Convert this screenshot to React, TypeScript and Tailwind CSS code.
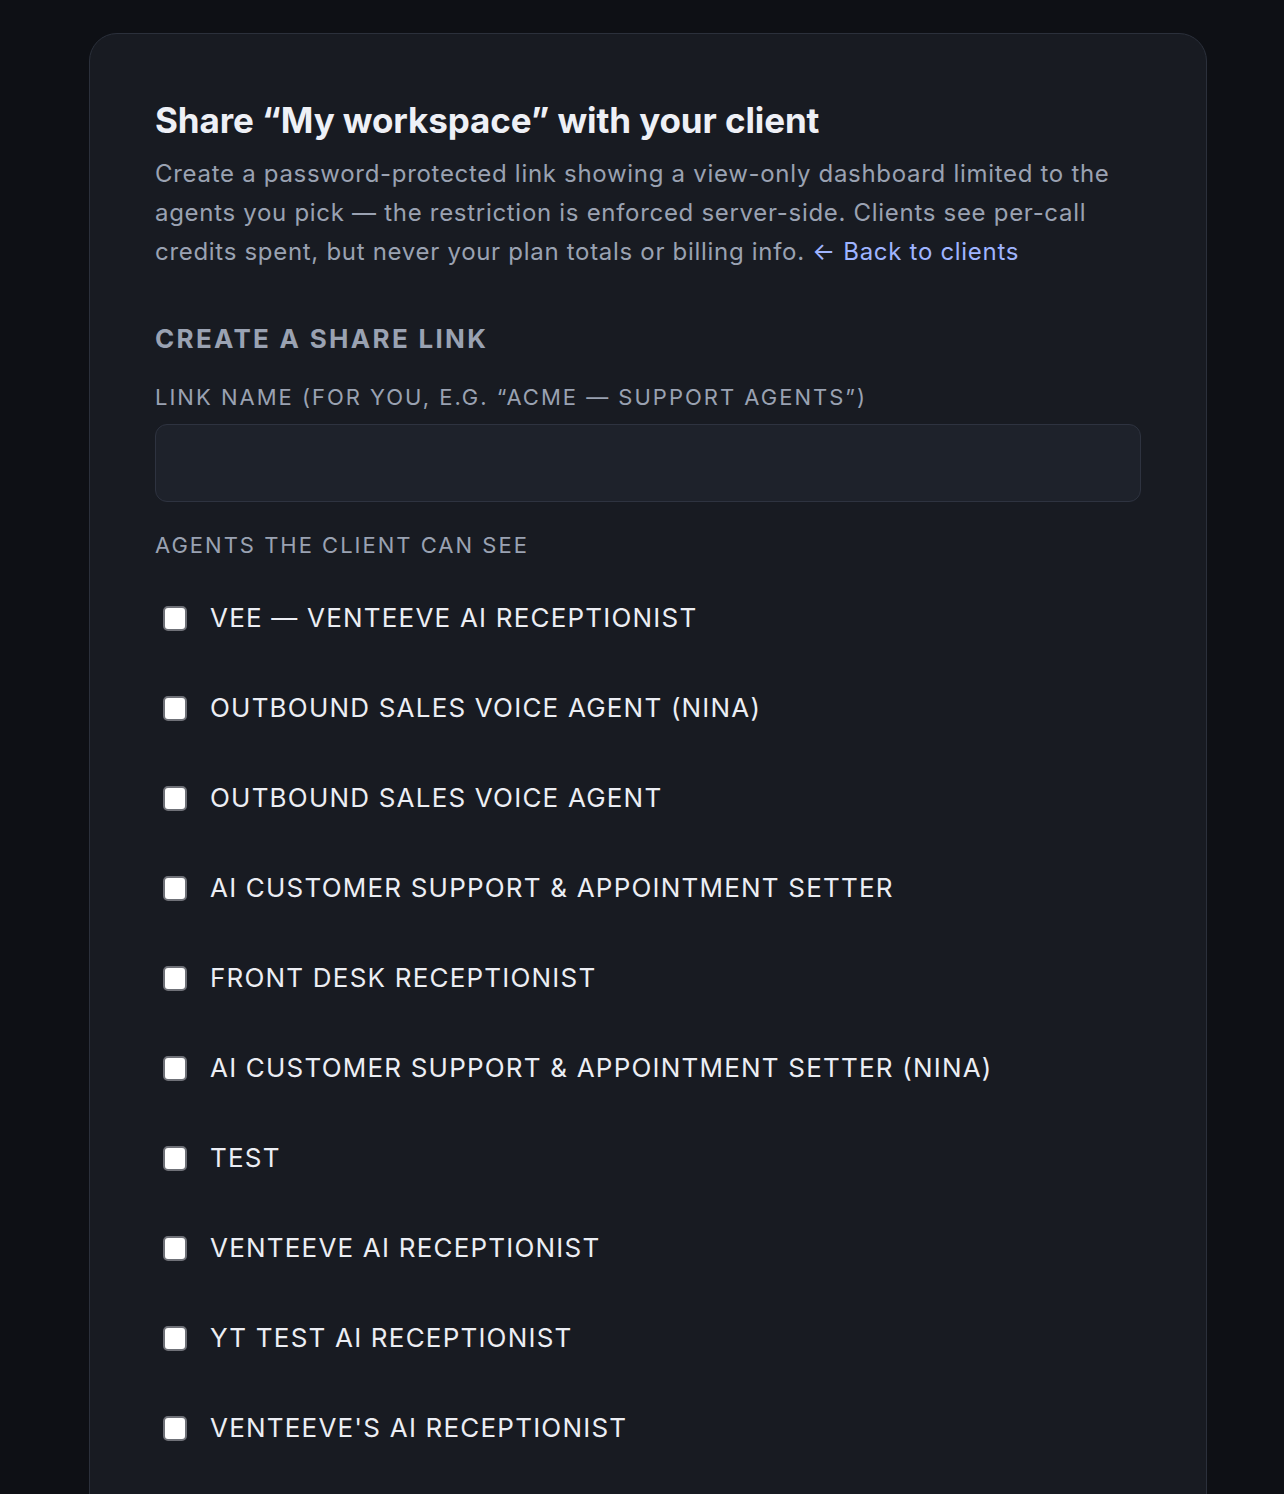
import React, { useState } from 'react';

const agents = [
    'Vee — Venteeve AI Receptionist',
    'Outbound Sales Voice Agent (Nina)',
    'Outbound Sales Voice Agent',
    'AI Customer Support & Appointment Setter',
    'Front Desk Receptionist',
    'AI Customer Support & Appointment Setter (Nina)',
    'Test',
    'Venteeve AI Receptionist',
    'YT Test AI Receptionist',
    "Venteeve's AI Receptionist",
];

export default function App() {
    const [name, setName] = useState('');
    const [selected, setSelected] = useState<Set<number>>(new Set());

    const toggle = (i: number) => {
        const next = new Set(selected);
        if (next.has(i)) {
            next.delete(i);
        } else {
            next.add(i);
        }
        setSelected(next);
    };

    return (
        <div
            className="h-[1494px] w-[1284px] bg-[#0e1015] pt-[33px] px-[77px] overflow-hidden"
            style={{ fontFamily: 'Inter, "Noto Sans", sans-serif' }}
        >
            <div className="ml-[12px] w-[1118px] bg-[#181b22] border border-[#2b303b] rounded-[28px] pt-[64px] px-[65px] pb-[80px]">
                <h1 className="text-[35px] leading-[44px] font-bold text-[#eef0f6] tracking-[-0.1px]">
                    Share “My workspace” with your client
                </h1>
                <p className="mt-[12px] text-[24px] leading-[39px] tracking-[0.7px] text-[#9aa2b2]">
                    Create a password-protected link showing a view-only dashboard limited to the agents you pick — the restriction is enforced server-side. Clients see per-call credits spent, but never your plan totals or billing info.{' '}
                    <a href="#" className="text-[#9fb4ff]">← Back to clients</a>
                </p>

                <h2 className="mt-[51px] text-[26px] leading-[34px] font-bold uppercase tracking-[2.3px] text-[#9aa2b2]">
                    Create a share link
                </h2>

                <label className="block mt-[26px] text-[22px] leading-[30px] uppercase tracking-[2px] text-[#9aa2b2]">
                    Link name (for you, e.g. “Acme — Support agents”)
                </label>
                <input
                    value={name}
                    onChange={(e) => setName(e.target.value)}
                    className="mt-[12px] block w-full h-[78px] rounded-[12px] bg-[#1e222b] border border-[#2e3340] px-5 text-[24px] text-[#eef0f6] outline-none"
                />

                <div className="mt-[28px] text-[22px] leading-[30px] uppercase tracking-[2px] text-[#9aa2b2]">
                    Agents the client can see
                </div>

                <div className="mt-[13px] flex flex-col">
                    {agents.map((agent, i) => (
                        <label key={agent} className="h-[90px] flex items-center cursor-pointer">
                            <span
                                onClick={() => toggle(i)}
                                className="ml-[8px] w-[24px] h-[25px] rounded-[5px] bg-white border-2 border-[#6f7178] shrink-0 flex items-center justify-center"
                            >
                                {selected.has(i) && (
                                    <svg viewBox="0 0 16 16" className="w-4 h-4 text-[#181b22]">
                                        <path d="M3 8.5l3 3 7-7" fill="none" stroke="currentColor" strokeWidth="2" />
                                    </svg>
                                )}
                            </span>
                            <span className="ml-[23px] text-[26px] leading-[34px] uppercase tracking-[1.2px] text-[#eceef4]">
                                {agent}
                            </span>
                        </label>
                    ))}
                </div>
            </div>
        </div>
    );
}
